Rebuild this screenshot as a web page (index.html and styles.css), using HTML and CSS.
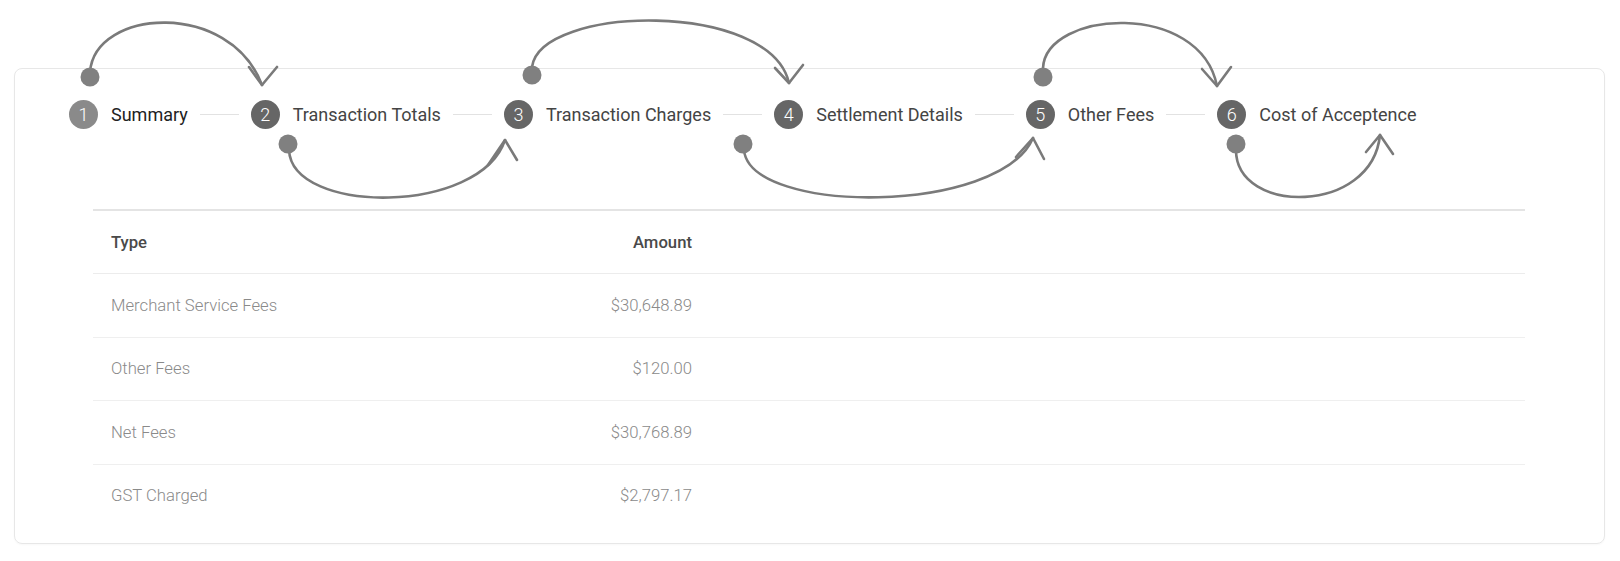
FILE: index.html
```html
<!DOCTYPE html>
<html lang="en">
<head>
<meta charset="utf-8">
<title>Summary</title>
<link rel="stylesheet" href="styles.css">
</head>
<body>
<div class="card">
  <div class="stepper">
    <div class="step step-first"><span class="num">1</span><span class="label label-active">Summary</span></div>
    <div class="connector"></div>
    <div class="step"><span class="num">2</span><span class="label">Transaction Totals</span></div>
    <div class="connector"></div>
    <div class="step"><span class="num">3</span><span class="label">Transaction Charges</span></div>
    <div class="connector"></div>
    <div class="step"><span class="num">4</span><span class="label">Settlement Details</span></div>
    <div class="connector"></div>
    <div class="step"><span class="num">5</span><span class="label">Other Fees</span></div>
    <div class="connector"></div>
    <div class="step"><span class="num">6</span><span class="label">Cost of Acceptence</span></div>
  </div>
  <table class="fees">
    <thead>
      <tr><th class="c-type">Type</th><th class="c-amt">Amount</th><th class="c-fill"></th></tr>
    </thead>
    <tbody>
      <tr><td class="c-type">Merchant Service Fees</td><td class="c-amt">$30,648.89</td><td class="c-fill"></td></tr>
      <tr><td class="c-type">Other Fees</td><td class="c-amt">$120.00</td><td class="c-fill"></td></tr>
      <tr><td class="c-type">Net Fees</td><td class="c-amt">$30,768.89</td><td class="c-fill"></td></tr>
      <tr><td class="c-type">GST Charged</td><td class="c-amt">$2,797.17</td><td class="c-fill"></td></tr>
    </tbody>
  </table>
</div>
<svg class="overlay" width="1620" height="561" viewBox="0 0 1620 561" aria-hidden="true">
  <g class="arc">
    <path d="M90,72 C95,8 230,0 262,85"/>
    <polyline points="249,67 262,85 277,67"/>
    <path d="M289,150 C292,215 480,215 505,140"/>
    <polyline points="488,165 505,140 517,160"/>
    <path d="M532,67 C540,5 770,0 789,83"/>
    <polyline points="775,68 789,83 803,65"/>
    <path d="M744,150 C750,215 1000,215 1033,138"/>
    <polyline points="1016,157 1033,138 1044,159"/>
    <path d="M1043,68 C1046,10 1200,0 1217,86"/>
    <polyline points="1202,69 1217,86 1231,67"/>
    <path d="M1236,150 C1236,215 1372,215 1380,135"/>
    <polyline points="1366,152 1380,135 1393,154"/>
  </g>
  <g class="dots">
    <circle cx="90" cy="77" r="9.5"/>
    <circle cx="288" cy="144" r="9.5"/>
    <circle cx="532" cy="75" r="9.5"/>
    <circle cx="743" cy="144" r="9.5"/>
    <circle cx="1043" cy="77" r="9.5"/>
    <circle cx="1236" cy="144" r="9.5"/>
  </g>
</svg>
</body>
</html>
```
FILE: styles.css
```css
html, body {
  margin: 0;
  padding: 0;
  background: #ffffff;
}
body {
  position: relative;
  width: 1620px;
  height: 561px;
  overflow: hidden;
  font-family: Roboto, "Liberation Sans", Arial, sans-serif;
}
.card {
  margin: 68px 15px 0 14px;
  border: 1px solid #e7e7e7;
  border-radius: 8px;
  padding: 0 0 16px 0;
  box-shadow: 0 1px 2px rgba(0,0,0,0.03);
}
.stepper {
  display: flex;
  align-items: center;
  height: 90px;
  padding-left: 54px;
}
.step {
  display: flex;
  align-items: center;
  gap: 13px;
}
.num {
  width: 29px;
  height: 29px;
  border-radius: 50%;
  background: #666666;
  color: #ffffff;
  font-size: 18px;
  font-weight: 300;
  display: flex;
  align-items: center;
  justify-content: center;
}
.step-first .num {
  background: #8a8a8a;
}
.label {
  font-size: 18px;
  color: #444444;
}
.label-active {
  color: #222222;
}
.connector {
  width: 39px;
  height: 1px;
  background: #e2e2e2;
  margin: 0 12px;
}
.fees {
  margin: 50px 79px 0 78px;
  width: calc(100% - 157px);
  border-collapse: collapse;
  font-size: 16.7px;
}
.fees thead tr {
  border-top: 2px solid #e4e4e4;
}
.fees th {
  height: 62px;
  font-weight: 500;
  color: #4a4a4a;
  text-align: left;
  padding: 0 18px;
  border-bottom: 1px solid #ececec;
}
.fees td {
  height: 62.5px;
  font-weight: 300;
  color: #8a8a8a;
  padding: 0 18px;
}
.fees tbody tr + tr td {
  border-top: 1px solid #efefef;
}
.fees .c-type {
  width: 415px;
}
.fees .c-amt {
  width: 130px;
  text-align: right;
}
.overlay {
  position: absolute;
  left: 0;
  top: 0;
  pointer-events: none;
}
.arc path, .arc polyline {
  fill: none;
  stroke: #7a7a7a;
  stroke-width: 2.6;
  stroke-linecap: round;
  stroke-linejoin: round;
}
.dots circle {
  fill: #808080;
}
```
